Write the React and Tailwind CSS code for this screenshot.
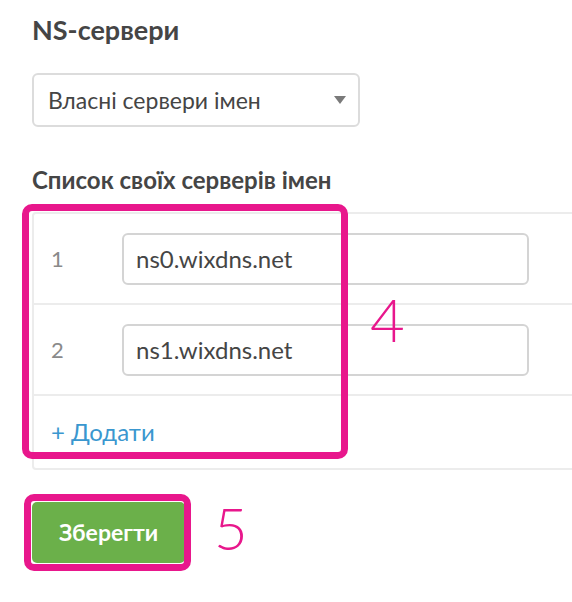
export default function App() {
  const servers = ["ns0.wixdns.net", "ns1.wixdns.net"]

  return (
    <div className="relative w-[572px] h-[602px] overflow-hidden bg-white pl-8 pt-[13px] font-['Lato','Liberation_Sans',sans-serif] text-[#454545]">
      <h2 className="text-[27px] leading-[34px] font-bold">NS-сервери</h2>

      <div className="mt-[26px] w-[328px] h-[54px] rounded-[6px] border-2 border-[#dcdcdc] flex items-center justify-between pl-[14px] pr-[12px]">
        <span className="text-[23px]">Власні сервери імен</span>
        <svg width="12" height="8" viewBox="0 0 12 8">
          <path d="M0 0h12L6 8z" fill="#7a7a7a" />
        </svg>
      </div>

      <h3 className="mt-[39px] text-[24px] leading-[28px] font-bold">Список своїх серверів імен</h3>

      <div className="mt-[18px] w-[560px] border-2 border-[#ececec] rounded-[4px]">
        {servers.map((s, i) => (
          <div key={s} className="h-[91px] border-b-2 border-[#ececec] flex items-center">
            <span className="w-[88px] pl-[17px] text-[22px] text-[#8a8a8a]">{i + 1}</span>
            <div className="w-[407px] h-[52px] rounded-[6px] border-2 border-[#d4d4d4] flex items-center pl-[12px] text-[24px]">
              {s}
            </div>
          </div>
        ))}
        <div className="h-[72px] flex items-end pb-[22px] pl-[17px]">
          <span className="text-[24px] leading-[28px] text-[#3a97cf]">+ Додати</span>
        </div>
      </div>

      <button className="mt-[32px] w-[153px] h-[61px] rounded-[5px] bg-[#6bb04a] text-white text-[23px] font-bold">
        Зберегти
      </button>

      <div className="absolute left-[22px] top-[204px] w-[326px] h-[255px] rounded-[10px] border-[7px] border-[#e8178c]" />
      <div className="absolute left-[24px] top-[494px] w-[167px] h-[77px] rounded-[10px] border-[7px] border-[#e8178c]" />
      <span className="absolute left-[370px] top-[274px] text-[60px] font-light text-[#e8178c]">4</span>
      <span className="absolute left-[214px] top-[484px] text-[58px] font-light text-[#e8178c]">5</span>
    </div>
  )
}
